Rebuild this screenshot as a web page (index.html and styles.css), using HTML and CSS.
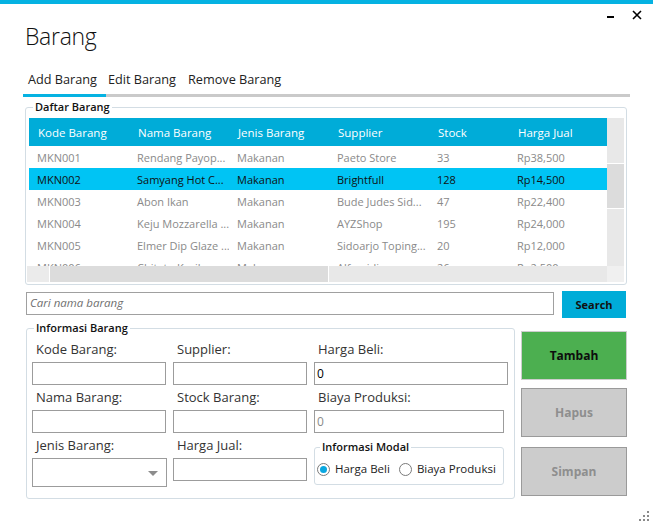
FILE: index.html
```html
<!DOCTYPE html>
<html>
<head>
<meta charset="utf-8">
<link rel="stylesheet" href="styles.css">
</head>
<body>
<div class="window">
  <div class="topbar"></div>
  <div class="winctrl">
    <span class="min"></span>
    <svg class="close" width="10" height="10" viewBox="0 0 10 10"><path d="M1 1L9 9M9 1L1 9" stroke="#000" stroke-width="1.6"/></svg>
  </div>
  <h1 class="title">Barang</h1>
  <nav class="tabs">
    <span class="tab tab1 active">Add Barang</span>
    <span class="tab tab2">Edit Barang</span>
    <span class="tab tab3">Remove Barang</span>
  </nav>

  <section class="group daftar">
    <span class="legend">Daftar Barang</span>
    <div class="gridwrap">
      <div class="viewport">
        <div class="row head">
          <span>Kode Barang</span><span>Nama Barang</span><span>Jenis Barang</span><span>Supplier</span><span>Stock</span><span>Harga Jual</span>
        </div>
        <div class="row">
          <span>MKN001</span><span>Rendang Payop...</span><span>Makanan</span><span>Paeto Store</span><span>33</span><span>Rp38,500</span>
        </div>
        <div class="row sel">
          <span>MKN002</span><span>Samyang Hot C...</span><span>Makanan</span><span>Brightfull</span><span>128</span><span>Rp14,500</span>
        </div>
        <div class="row">
          <span>MKN003</span><span>Abon Ikan</span><span>Makanan</span><span>Bude Judes Sid...</span><span>47</span><span>Rp22,400</span>
        </div>
        <div class="row">
          <span>MKN004</span><span>Keju Mozzarella ...</span><span>Makanan</span><span>AYZShop</span><span>195</span><span>Rp24,000</span>
        </div>
        <div class="row">
          <span>MKN005</span><span>Elmer Dip Glaze ...</span><span>Makanan</span><span>Sidoarjo Toping...</span><span>20</span><span>Rp12,000</span>
        </div>
        <div class="row">
          <span>MKN006</span><span>Chitato Kecil</span><span>Makanan</span><span>Alfamidi</span><span>26</span><span>Rp2,500</span>
        </div>
      </div>
      <div class="vscroll">
        <div class="vtrack top"></div>
        <div class="vthumb"></div>
        <div class="vtrack rest"></div>
      </div>
      <div class="hscroll">
        <div class="hleft"></div>
        <div class="hthumb"></div>
        <div class="htrack"></div>
      </div>
      <div class="corner"></div>
    </div>
  </section>

  <div class="searchrow">
    <div class="searchbox">Cari nama barang</div>
    <button class="btn-search">Search</button>
  </div>

  <div class="bottom">
    <section class="group info">
      <span class="legend">Informasi Barang</span>
      <div class="form">
        <div class="field c1">
          <label>Kode Barang:</label>
          <div class="input"></div>
        </div>
        <div class="field c2">
          <label>Supplier:</label>
          <div class="input"></div>
        </div>
        <div class="field c3">
          <label>Harga Beli:</label>
          <div class="input wide">0</div>
        </div>
        <div class="field c1">
          <label>Nama Barang:</label>
          <div class="input"></div>
        </div>
        <div class="field c2">
          <label>Stock Barang:</label>
          <div class="input"></div>
        </div>
        <div class="field c3">
          <label>Biaya Produksi:</label>
          <div class="input mid disabled">0</div>
        </div>
        <div class="field c1">
          <label>Jenis Barang:</label>
          <div class="combo"><span class="arrow"></span></div>
        </div>
        <div class="field c2">
          <label>Harga Jual:</label>
          <div class="input"></div>
        </div>
        <div class="field c3">
          <div class="group modal">
            <span class="legend">Informasi Modal</span>
            <div class="radios">
              <span class="radio on"><span class="dot"></span>Harga Beli</span>
              <span class="radio"><span class="dot"></span>Biaya Produksi</span>
            </div>
          </div>
        </div>
      </div>
    </section>
    <div class="actions">
      <button class="act tambah">Tambah</button>
      <button class="act hapus">Hapus</button>
      <button class="act simpan">Simpan</button>
    </div>
  </div>

  <svg class="grip" width="12" height="12" viewBox="0 0 12 12">
    <rect x="9" y="1" width="2" height="2" fill="#8a8a8a"/>
    <rect x="5" y="5" width="2" height="2" fill="#8a8a8a"/>
    <rect x="9" y="5" width="2" height="2" fill="#8a8a8a"/>
    <rect x="1" y="9" width="2" height="2" fill="#8a8a8a"/>
    <rect x="5" y="9" width="2" height="2" fill="#8a8a8a"/>
    <rect x="9" y="9" width="2" height="2" fill="#8a8a8a"/>
  </svg>
</div>
</body>
</html>
```

FILE: styles.css
```css
* { box-sizing: border-box; }
html, body { margin: 0; padding: 0; }
body {
  width: 653px;
  height: 525px;
  overflow: hidden;
  background: #fff;
  font-family: "Open Sans", "Noto Sans", sans-serif;
  color: #222;
}
.window { position: relative; width: 653px; height: 525px; }
.topbar { height: 4px; background: #05b2e2; }

.winctrl { position: absolute; top: 10px; left: 607px; width: 34px; height: 10px; }
.min { position: absolute; left: 0; top: 6px; width: 7px; height: 2px; background: #000; }
.close { position: absolute; left: 25px; top: 0; }

.title {
  margin: 0;
  padding: 17px 0 0 25px;
  font-size: 23px;
  font-weight: 300;
  line-height: 30px;
  letter-spacing: -0.3px;
  color: #111;
}

.tabs {
  display: flex;
  margin: 18px 0 0 23px;
  width: 607px;
  height: 28px;
  border-bottom: 3px solid #cacaca;
  font-size: 12.7px;
  line-height: 20px;
  color: #222;
}
.tab { display: block; padding-top: 0; height: 28px; }
.tab1 { width: 83px; padding-left: 5px; }
.tab2 { width: 80px; padding-left: 2px; }
.tab3 { padding-left: 2px; }
.tab.active { border-bottom: 3px solid #05b2e2; height: 28px; margin-bottom: -3px; }

.group {
  position: relative;
  border: 1px solid #d3dde4;
  border-radius: 3px;
}
.legend {
  position: absolute;
  top: -9px;
  left: 7px;
  padding: 0 2px;
  background: #fff;
  font-size: 11px;
  font-weight: 600;
  line-height: 16px;
  color: #111;
}

.daftar {
  margin: 10px 0 0 25px;
  width: 602px;
  height: 178px;
  padding: 10px 1px 1px 1px;
}
.gridwrap {
  display: grid;
  grid-template-columns: 580px 17px;
  grid-template-rows: 148px 16px;
}
.viewport { overflow: hidden; padding-left: 2px; }
.row {
  display: grid;
  grid-template-columns: 100px 100px 100px 100px 80px 100px;
  height: 22px;
  width: 620px;
  font-size: 11px;
  line-height: 24px;
  color: #8a8a8a;
  white-space: nowrap;
}
.row span { padding-left: 8px; overflow: hidden; }
.row.head {
  height: 28px;
  line-height: 30px;
  background: #00acd8;
  color: #fff;
  font-size: 11.5px;
  width: 578px;
  overflow: hidden;
}
.row.head span { padding-left: 9px; }
.row.sel { background: #00c4f4; color: #111; width: 578px; }

.vscroll { display: flex; flex-direction: column; background: #e8e8e8; }
.vtrack.top { height: 45px; }
.vthumb { height: 46px; background: #dcdcdc; border-top: 1px solid #fff; border-bottom: 1px solid #fff; }
.vtrack.rest { flex: 1; }

.hscroll { display: flex; background: #e8e8e8; }
.hleft { width: 22px; background: #ebebeb; }
.hthumb { width: 280px; background: #dcdcdc; border-left: 1px solid #fff; border-right: 1px solid #fff; }
.htrack { flex: 1; }
.corner { background: #f0f0f0; }

.searchrow {
  display: flex;
  align-items: flex-start;
  gap: 8px;
  margin: 6px 0 0 26px;
}
.searchbox {
  margin-top: 1px;
  width: 528px;
  height: 23px;
  border: 1px solid #a0a0a0;
  padding-left: 3px;
  font-size: 11.5px;
  line-height: 20px;
  font-style: italic;
  color: #6f6f6f;
}
.btn-search {
  width: 64px;
  height: 27px;
  border: none;
  background: #00acd8;
  font-family: inherit;
  font-size: 11px;
  font-weight: 700;
  color: #111;
  padding: 0;
}

.bottom {
  display: flex;
  gap: 6px;
  margin: 10px 0 0 26px;
}
.info {
  width: 489px;
  height: 171px;
  padding: 8px 0 0 5px;
}
.form {
  display: grid;
  grid-template-columns: 134px 134px 194px;
  grid-auto-rows: 48px;
  column-gap: 7px;
}
.field label {
  display: block;
  height: 25px;
  padding-left: 4px;
  font-size: 13px;
  line-height: 25px;
  color: #333;
}
.input {
  height: 23px;
  border: 1px solid #9c9c9c;
  background: #fff;
  font-size: 12px;
  line-height: 21px;
  padding-left: 2px;
  color: #000;
}
.input.wide { width: 194px; }
.input.mid { width: 190px; }
.input.disabled { color: #8a8a8a; }
.combo {
  position: relative;
  width: 135px;
  height: 29px;
  border: 1px solid #9c9c9c;
}
.arrow {
  position: absolute;
  left: 115px;
  top: 12px;
  width: 0;
  height: 0;
  border-left: 5px solid transparent;
  border-right: 5px solid transparent;
  border-top: 5px solid #8c8c8c;
}
.modal {
  margin-top: 14px;
  width: 190px;
  height: 38px;
}
.modal .legend { left: 5px; }
.radios {
  display: flex;
  gap: 9px;
  padding: 13px 0 0 2px;
  font-size: 11.5px;
  line-height: 16px;
  color: #222;
}
.radio { display: flex; align-items: center; gap: 5px; }
.dot {
  width: 13px;
  height: 13px;
  border-radius: 50%;
  border: 1px solid #7a7a7a;
  background: #fff;
  position: relative;
}
.radio.on .dot::after {
  content: "";
  position: absolute;
  left: 2px;
  top: 2px;
  width: 7px;
  height: 7px;
  border-radius: 50%;
  background: #0aa7e0;
}

.actions {
  display: flex;
  flex-direction: column;
  padding-top: 3px;
}
.act {
  width: 106px;
  height: 49px;
  font-family: inherit;
  font-size: 12px;
  font-weight: 700;
  padding: 0;
}
.tambah { background: #4caf50; border: 1px solid #cdcdcd; color: #0d0d0d; }
.hapus { margin-top: 8px; background: #cccccc; border: 1px solid #9a9a9a; color: #8e8e8e; }
.simpan { margin-top: 10px; background: #cccccc; border: 1px solid #9a9a9a; color: #8e8e8e; }

.grip { position: absolute; right: 3px; bottom: 3px; }
```
